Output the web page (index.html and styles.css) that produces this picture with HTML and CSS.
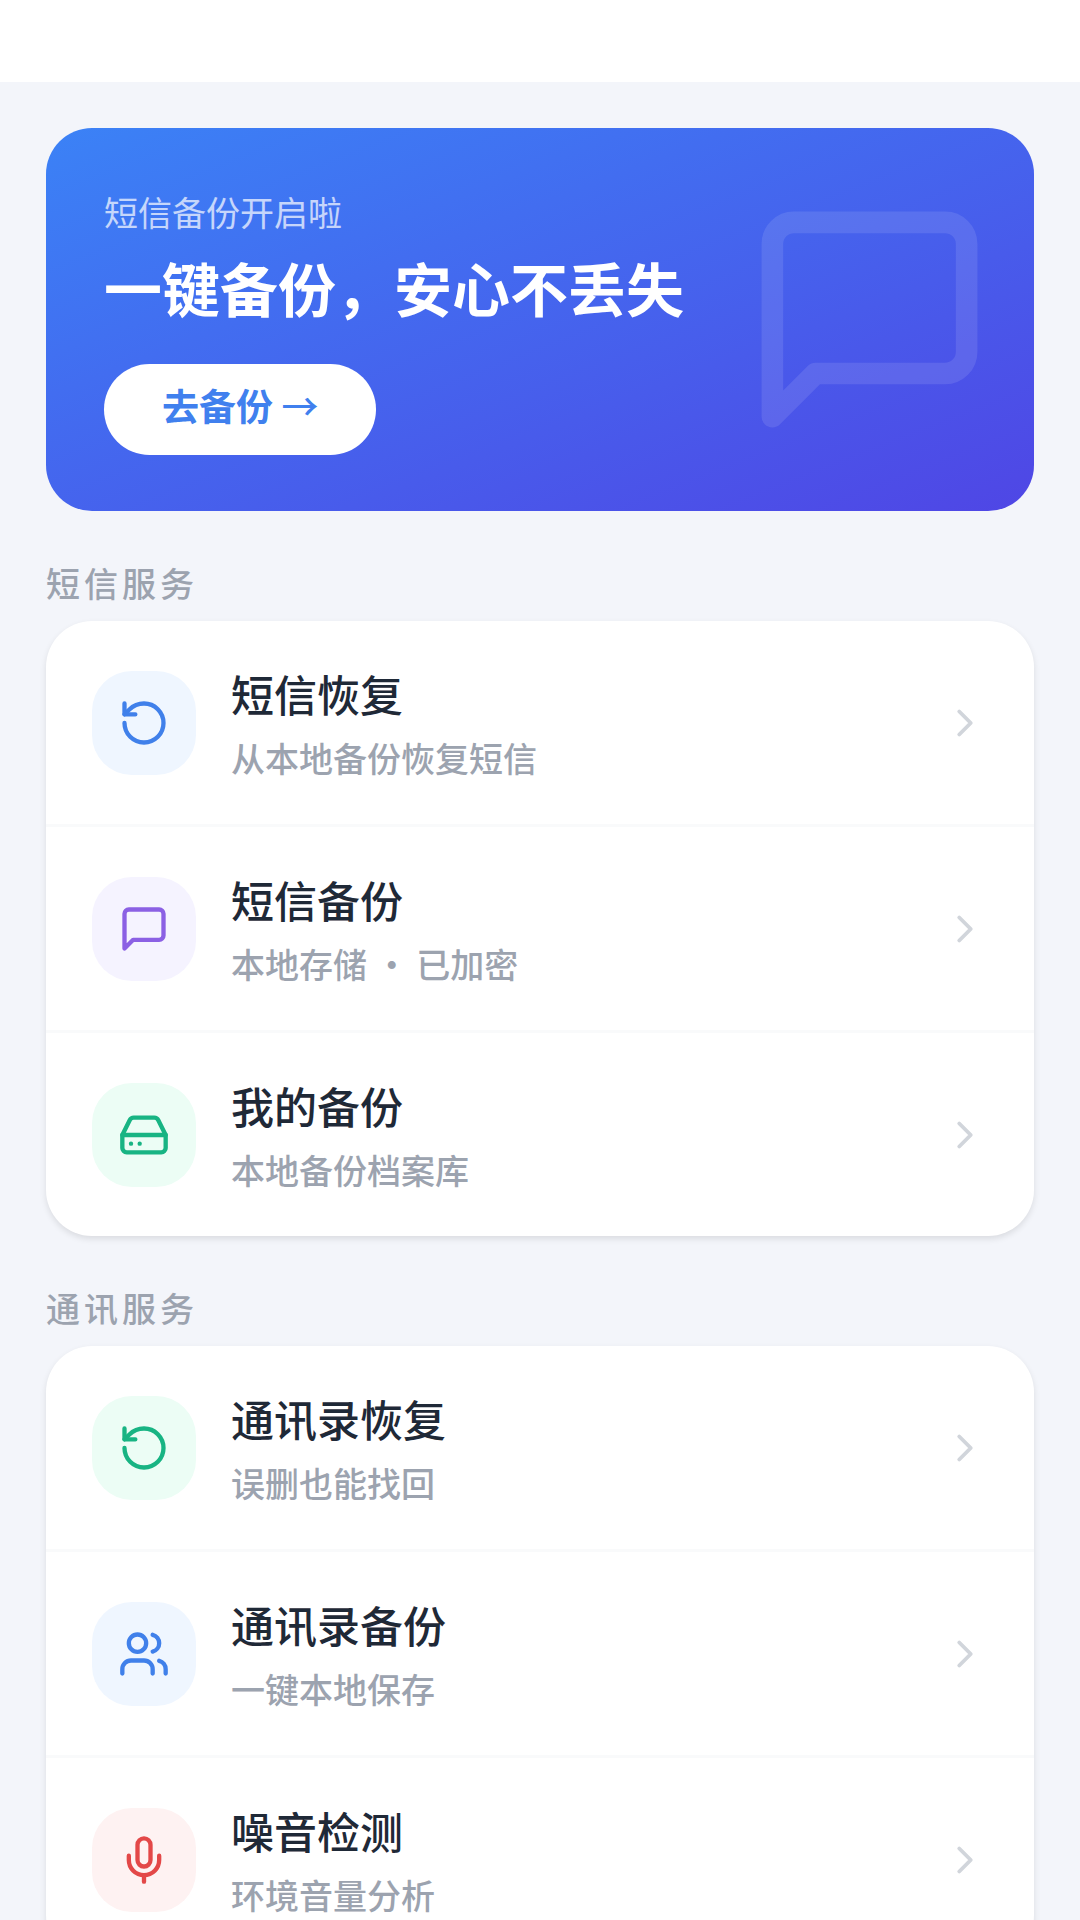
FILE: index.html
```html
<!DOCTYPE html>
<html lang="zh-CN">
<head>
  <meta charset="UTF-8">
  <meta name="viewport" content="width=device-width, initial-scale=1.0">
  <title>短信备份</title>
  <link rel="stylesheet" href="styles.css">
</head>
<body>
  <header class="topbar"></header>

  <main class="content">
    <section class="banner">
      <p class="banner-tip">短信备份开启啦</p>
      <h1 class="banner-title">一键备份，安心不丢失</h1>
      <button class="banner-button" type="button">去备份 <span class="banner-arrow">→</span></button>
      <svg class="banner-icon" viewBox="0 0 24 24"><path d="M21 15a2 2 0 0 1-2 2H7l-4 4V5a2 2 0 0 1 2-2h14a2 2 0 0 1 2 2z"/></svg>
    </section>

    <section class="group">
      <h2 class="group-title">短信服务</h2>
      <div class="card">
        <a class="row" href="#sms-restore">
          <span class="icon blue">
            <svg viewBox="0 0 24 24"><path d="M3 12a9 9 0 1 0 9-9 9.75 9.75 0 0 0-6.74 2.74L3 8"/><path d="M3 3v5h5"/></svg>
          </span>
          <span class="text">
            <span class="name">短信恢复</span>
            <span class="desc">从本地备份恢复短信</span>
          </span>
          <svg class="arrow" viewBox="0 0 24 24"><path d="m9 18 6-6-6-6"/></svg>
        </a>
        <a class="row" href="#sms-backup">
          <span class="icon purple">
            <svg viewBox="0 0 24 24"><path d="M21 15a2 2 0 0 1-2 2H7l-4 4V5a2 2 0 0 1 2-2h14a2 2 0 0 1 2 2z"/></svg>
          </span>
          <span class="text">
            <span class="name">短信备份</span>
            <span class="desc">本地存储 • 已加密</span>
          </span>
          <svg class="arrow" viewBox="0 0 24 24"><path d="m9 18 6-6-6-6"/></svg>
        </a>
        <a class="row" href="#my-backup">
          <span class="icon green">
            <svg viewBox="0 0 24 24"><path d="M22 12H2"/><path d="M5.45 5.11 2 12v6a2 2 0 0 0 2 2h16a2 2 0 0 0 2-2v-6l-3.45-6.89A2 2 0 0 0 16.76 4H7.24a2 2 0 0 0-1.79 1.11z"/><path d="M6 16h.01"/><path d="M10 16h.01"/></svg>
          </span>
          <span class="text">
            <span class="name">我的备份</span>
            <span class="desc">本地备份档案库</span>
          </span>
          <svg class="arrow" viewBox="0 0 24 24"><path d="m9 18 6-6-6-6"/></svg>
        </a>
      </div>
    </section>

    <section class="group">
      <h2 class="group-title">通讯服务</h2>
      <div class="card">
        <a class="row" href="#contacts-restore">
          <span class="icon green">
            <svg viewBox="0 0 24 24"><path d="M3 12a9 9 0 1 0 9-9 9.75 9.75 0 0 0-6.74 2.74L3 8"/><path d="M3 3v5h5"/></svg>
          </span>
          <span class="text">
            <span class="name">通讯录恢复</span>
            <span class="desc">误删也能找回</span>
          </span>
          <svg class="arrow" viewBox="0 0 24 24"><path d="m9 18 6-6-6-6"/></svg>
        </a>
        <a class="row" href="#contacts-backup">
          <span class="icon blue">
            <svg viewBox="0 0 24 24"><path d="M16 21v-2a4 4 0 0 0-4-4H6a4 4 0 0 0-4 4v2"/><circle cx="9" cy="7" r="4"/><path d="M22 21v-2a4 4 0 0 0-3-3.87"/><path d="M16 3.13a4 4 0 0 1 0 7.75"/></svg>
          </span>
          <span class="text">
            <span class="name">通讯录备份</span>
            <span class="desc">一键本地保存</span>
          </span>
          <svg class="arrow" viewBox="0 0 24 24"><path d="m9 18 6-6-6-6"/></svg>
        </a>
        <a class="row" href="#noise">
          <span class="icon red">
            <svg viewBox="0 0 24 24"><path d="M12 2a3 3 0 0 0-3 3v7a3 3 0 0 0 6 0V5a3 3 0 0 0-3-3z"/><path d="M19 10v2a7 7 0 0 1-14 0v-2"/><path d="M12 19v3"/></svg>
          </span>
          <span class="text">
            <span class="name">噪音检测</span>
            <span class="desc">环境音量分析</span>
          </span>
          <svg class="arrow" viewBox="0 0 24 24"><path d="m9 18 6-6-6-6"/></svg>
        </a>
      </div>
    </section>
  </main>
</body>
</html>
```
FILE: styles.css
```css
* {
  box-sizing: border-box;
  margin: 0;
  padding: 0;
}
body {
  background: #f3f5fa;
  font-family: "Noto Sans CJK SC", sans-serif;
  color: #1f2937;
}
svg {
  fill: none;
  stroke: currentColor;
  stroke-width: 2;
  stroke-linecap: round;
  stroke-linejoin: round;
}
.topbar {
  height: 82px;
  background: #fff;
}
.content {
  padding: 46px;
}

/* banner */
.banner {
  position: relative;
  padding: 58px 58px 56px;
  border-radius: 46px;
  background: linear-gradient(to bottom right, #3b82f6, #4f46e5);
  color: #fff;
}
.banner-tip {
  font-size: 34px;
  line-height: 52px;
  opacity: 0.7;
}
.banner-title {
  margin: 8px 0 36px;
  font-size: 58px;
  font-weight: 700;
  line-height: 82px;
}
.banner-button {
  display: block;
  height: 91px;
  padding: 0 58px 10px;
  border: none;
  border-radius: 46px;
  background: #fff;
  color: #4080ee;
  font-family: inherit;
  font-size: 37px;
  font-weight: 700;
  cursor: pointer;
}
.banner-arrow {
  font-weight: 500;
}
.banner-icon {
  position: absolute;
  top: 62px;
  right: 35px;
  width: 259px;
  height: 259px;
  opacity: 0.1;
}

/* service lists */
.group {
  margin-top: 46px;
}
.group-title {
  margin-bottom: 12px;
  color: #9ca3af;
  font-size: 34px;
  font-weight: 500;
  line-height: 52px;
  letter-spacing: 4px;
}
.card {
  overflow: hidden;
  border-radius: 46px;
  background: #fff;
  box-shadow: 0 3px 6px rgba(0, 0, 0, 0.1);
}
.row {
  display: flex;
  align-items: center;
  gap: 35px;
  padding: 40px 46px;
  color: inherit;
  text-decoration: none;
}
.row + .row {
  border-top: 3px solid #f9fafb;
}
.icon {
  display: flex;
  align-items: center;
  justify-content: center;
  width: 104px;
  height: 104px;
  border-radius: 40px;
}
.icon svg {
  width: 52px;
  height: 52px;
}
.blue {
  background: #eff6ff;
  color: #4080ea;
}
.purple {
  background: #f5f3ff;
  color: #8b60e4;
}
.green {
  background: #ecfdf5;
  color: #18b483;
}
.red {
  background: #fef2f2;
  color: #e34848;
}
.text {
  display: flex;
  flex: 1;
  flex-direction: column;
  gap: 6px;
}
.name {
  font-size: 43px;
  font-weight: 500;
  line-height: 65px;
}
.desc {
  color: #9ca3af;
  font-size: 34px;
  font-weight: 500;
  line-height: 52px;
}
.arrow {
  width: 46px;
  height: 46px;
  color: #d1d5db;
}
```
